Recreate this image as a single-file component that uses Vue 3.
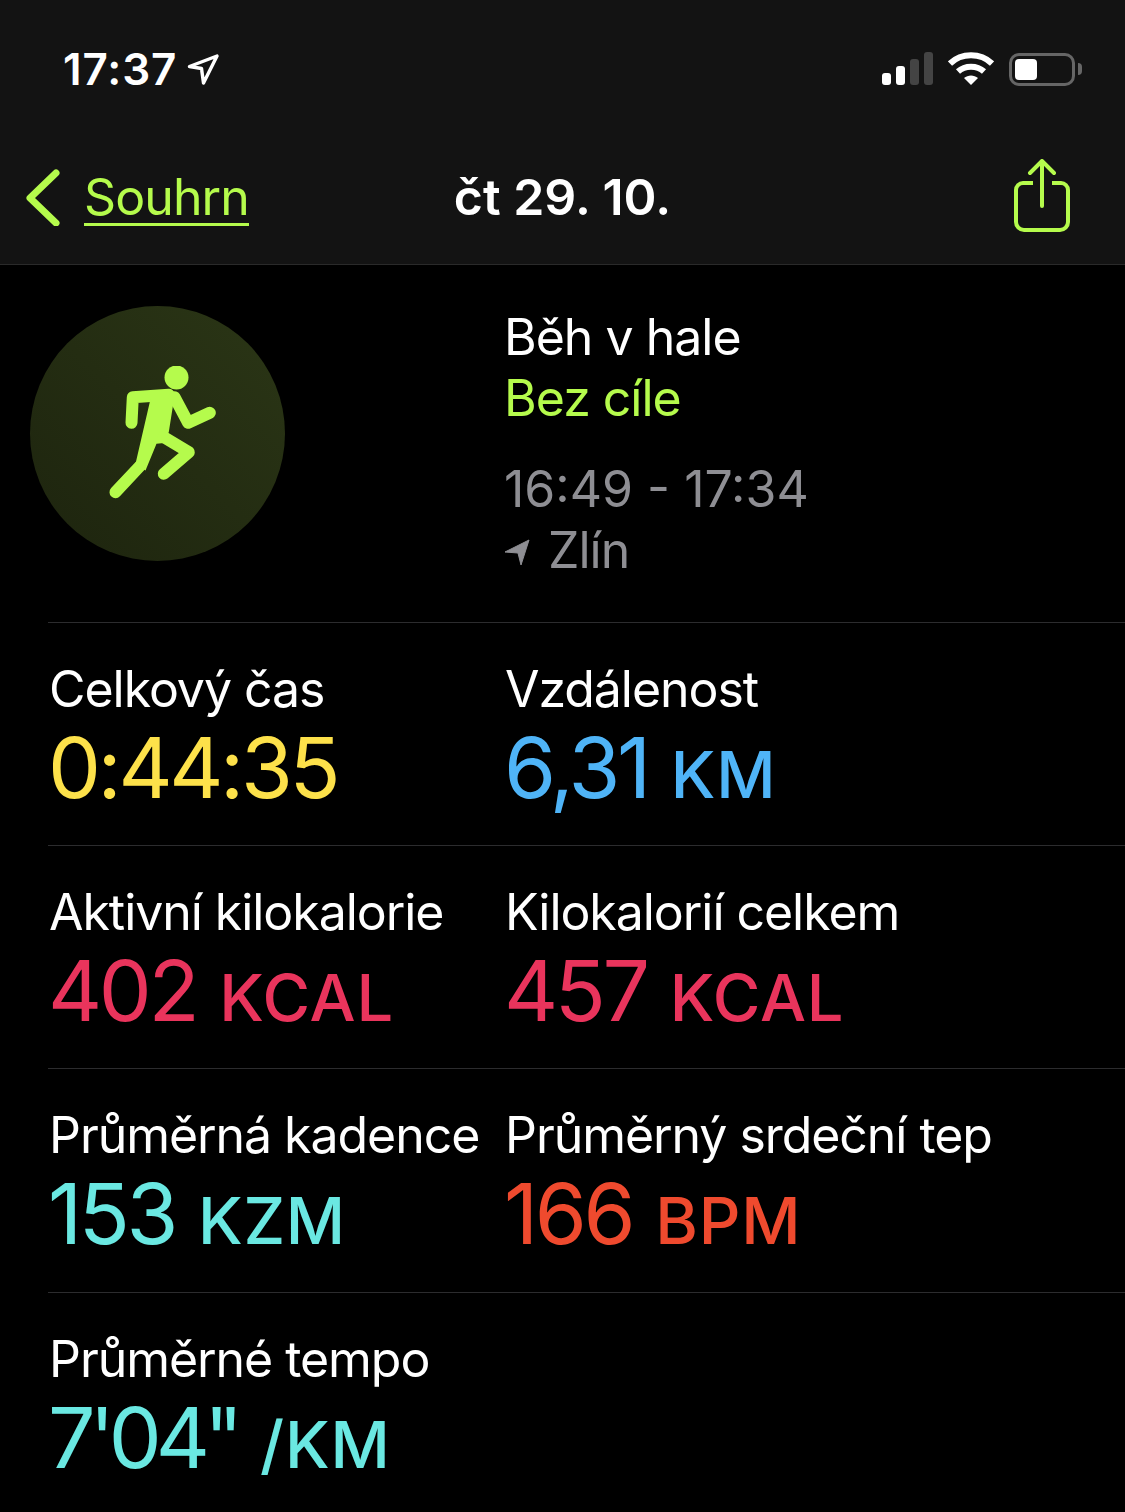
<script setup>
const rows = [
  [
    { label: 'Celkový čas', value: '0:44:35', unit: '', color: '#fde14a' },
    { label: 'Vzdálenost', value: '6,31', unit: 'KM', color: '#4fb4f7' }
  ],
  [
    { label: 'Aktivní kilokalorie', value: '402', unit: 'KCAL', color: '#e9345c' },
    { label: 'Kilokalorií celkem', value: '457', unit: 'KCAL', color: '#e9345c' }
  ],
  [
    { label: 'Průměrná kadence', value: '153', unit: 'KZM', color: '#6ae8e2' },
    { label: 'Průměrný srdeční tep', value: '166', unit: 'BPM', color: '#ef4a2e' }
  ],
  [
    { label: 'Průměrné tempo', value: '7\'04"', unit: '/KM', color: '#6ae8e2', tight: true }
  ]
]
</script>

<template>
  <div class="screen">
    <header class="top">
      <div class="status">
        <div class="clock">
          <span>17:37</span>
          <svg width="32" height="32" viewBox="0 0 32 32">
            <path d="M2.500 13.500 30 3 16.500 30 14.500 15.500Z" fill="none" stroke="#fff" stroke-width="3.400" stroke-linejoin="round" />
          </svg>
        </div>
        <div class="indicators">
          <svg width="52" height="34" viewBox="0 0 52 34">
            <rect x="0" y="21" width="9" height="12" rx="3" fill="#fff" />
            <rect x="14" y="14" width="9" height="19" rx="3" fill="#fff" />
            <rect x="28" y="7" width="9" height="26" rx="3" fill="#444" />
            <rect x="42" y="0" width="9" height="33" rx="3" fill="#444" />
          </svg>
          <svg class="wifi" width="46" height="34" viewBox="0 0 46 34">
            <path d="M2 11.500C13.500 .5 32.500 .5 44 11.500" fill="none" stroke="#fff" stroke-width="6" />
            <path d="M10 19.500C17 13 29 13 36 19.500" fill="none" stroke="#fff" stroke-width="6" />
            <path d="M16 26C20 22.500 26 22.500 30 26L23 33Z" fill="#fff" />
          </svg>
          <div class="battery">
            <div class="cell"><div class="charge"></div></div>
            <div class="nub"></div>
          </div>
        </div>
      </div>
      <nav class="nav">
        <a class="back">
          <svg width="36" height="58" viewBox="0 0 36 58">
            <path d="M32 5 6 30 32 55" fill="none" stroke="#b5fb4c" stroke-width="7" stroke-linecap="round" stroke-linejoin="round" />
          </svg>
          <span class="back-label">Souhrn</span>
        </a>
        <h1 class="date">čt 29. 10.</h1>
        <svg class="share" width="58" height="74" viewBox="0 0 58 74">
          <path d="M20 24H10A7 7 0 0 0 3 31V63A8 8 0 0 0 11 71H47A8 8 0 0 0 55 63V31A7 7 0 0 0 48 24H39" fill="none" stroke="#b5fb4c" stroke-width="4" />
          <path d="M29 47V2M17 14 29 2 41 14" fill="none" stroke="#b5fb4c" stroke-width="4" stroke-linecap="round" stroke-linejoin="round" />
        </svg>
      </nav>
    </header>

    <main>
      <section class="summary">
        <div class="badge">
          <svg width="116" height="136" viewBox="0 0 116 136">
            <circle cx="76.500" cy="11.500" r="12" fill="#b5fb4c" />
            <path d="M31.500 56.800 32.800 31.200 68.800 28.800" fill="none" stroke="#b5fb4c" stroke-width="12" stroke-linecap="round" stroke-linejoin="round" />
            <path d="M74.500 31.200 88.200 56.800 109.800 46.800" fill="none" stroke="#b5fb4c" stroke-width="12" stroke-linecap="round" stroke-linejoin="round" />
            <path d="M50.500 33H74L68.800 66 64 77 56.500 77.800 45.500 104.500 35.500 97.800Z" fill="#b5fb4c" />
            <path d="M63.800 107.800 88.800 86.200 63.800 71.200" fill="none" stroke="#b5fb4c" stroke-width="12" stroke-linecap="round" stroke-linejoin="round" />
            <path d="M40 100 15.500 126.200" fill="none" stroke="#b5fb4c" stroke-width="12" stroke-linecap="round" />
          </svg>
        </div>
        <div class="info">
          <div class="activity">Běh v hale</div>
          <div class="goal">Bez cíle</div>
          <div class="time">16:49 - 17:34</div>
          <div class="place">
            <svg width="26" height="28" viewBox="0 0 26 28">
              <path d="M1 15 25 3 17 28 14 16Z" fill="#8e8e93" stroke="#8e8e93" stroke-width="1" stroke-linejoin="round" />
            </svg>
            <span>Zlín</span>
          </div>
        </div>
      </section>

      <section v-for="(row, i) in rows" :key="i" class="stat-row">
        <div v-for="stat in row" :key="stat.label" class="stat">
          <div class="label">{{ stat.label }}</div>
          <div class="reading" :style="{ color: stat.color }">
            <span class="value" :class="{ tight: stat.tight }">{{ stat.value }}</span>
            <span v-if="stat.unit" class="unit">{{ stat.unit }}</span>
          </div>
        </div>
      </section>
    </main>
  </div>
</template>

<style>
html, body {
  margin: 0;
  background: #000;
}
</style>

<style scoped>
.screen {
  width: 1125px;
  height: 1512px;
  overflow: hidden;
  background: #000;
  color: #fff;
  font-family: Inter, "Liberation Sans", sans-serif;
}
.top {
  height: 264px;
  background: #131313;
  border-bottom: 1px solid #2a2a2a;
}
.status {
  display: flex;
  justify-content: space-between;
  align-items: center;
  height: 138px;
  padding: 0 43px 0 63px;
}
.clock {
  display: flex;
  align-items: center;
  gap: 10px;
  font-size: 44px;
  font-weight: 600;
  letter-spacing: 0.9px;
}
.indicators {
  display: flex;
  align-items: center;
  gap: 14px;
}
.battery {
  display: flex;
  align-items: center;
  gap: 3px;
  margin-left: 1px;
}
.cell {
  box-sizing: border-box;
  width: 66px;
  height: 33px;
  padding: 3px;
  border: 3px solid #666;
  border-radius: 10px;
}
.charge {
  width: 22px;
  height: 21px;
  background: #fff;
  border-radius: 4px;
}
.nub {
  width: 4px;
  height: 12px;
  background: #666;
  border-radius: 0 4px 4px 0;
}
.nav {
  position: relative;
  display: flex;
  justify-content: space-between;
  align-items: center;
  height: 118px;
  padding: 0 54px 0 24px;
}
.back {
  display: flex;
  align-items: center;
  gap: 24px;
  color: #b5fb4c;
}
.back-label {
  margin-top: 3px;
  font-size: 50px;
  line-height: 52px;
  letter-spacing: -0.9px;
  border-bottom: 3px solid #b5fb4c;
}
.date {
  position: absolute;
  left: 0;
  right: 0;
  margin: 0;
  text-align: center;
  font-size: 50px;
  font-weight: 600;
  letter-spacing: 0;
}
.share {
  margin-top: -2px;
}
.summary {
  display: grid;
  grid-template-columns: 504px 1fr;
  height: 357px;
}
.badge {
  display: flex;
  align-items: center;
  justify-content: center;
  width: 255px;
  height: 255px;
  margin: 41px 0 0 30px;
  border-radius: 50%;
  background: linear-gradient(45deg, #1d240e, #2b3616);
}
.info {
  padding-top: 42px;
  font-size: 50px;
  line-height: 61px;
  letter-spacing: -1px;
}
.goal {
  color: #b5fb4c;
}
.time {
  margin-top: 30px;
  color: #8e8e93;
  letter-spacing: 0;
}
.place {
  display: flex;
  align-items: center;
  gap: 18px;
  color: #8e8e93;
}
.stat-row {
  display: grid;
  grid-template-columns: 456px 1fr;
  box-sizing: border-box;
  height: 223.2px;
  margin-left: 48px;
  padding: 36px 0 0 1px;
  border-top: 1px solid #2c2c2e;
}
.label {
  font-size: 50px;
  line-height: 61px;
  letter-spacing: -1.05px;
  white-space: nowrap;
}
.reading {
  display: flex;
  align-items: baseline;
  gap: 23px;
  margin: 2px 0 0 -1px;
  line-height: 92px;
}
.value {
  font-size: 84px;
  font-weight: 400;
  letter-spacing: -3.4px;
}
.value.tight {
  letter-spacing: -6px;
}
.unit {
  font-size: 65px;
  font-weight: 500;
  letter-spacing: 0.8px;
}
</style>
